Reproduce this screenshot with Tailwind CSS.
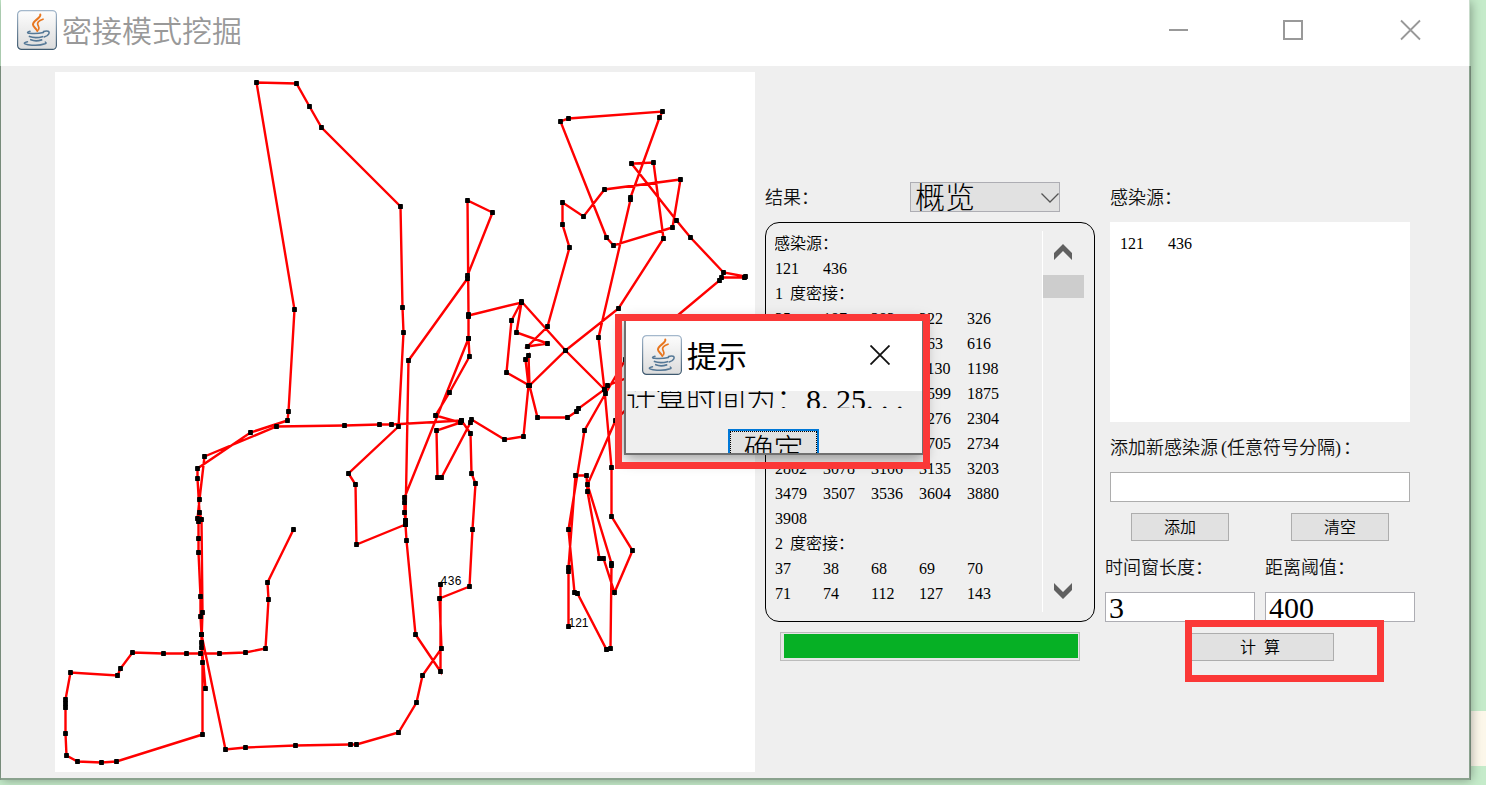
<!DOCTYPE html>
<html lang="zh-CN">
<head>
<meta charset="utf-8">
<title>密接模式挖掘</title>
<script src="https://cdn.jsdelivr.net/npm/@tailwindcss/browser@4"></script>
</head>
<body class="w-[1486px] h-[785px] overflow-hidden bg-[#c5ebca] font-['Liberation_Serif','Noto_Sans_CJK_SC',serif] text-black">
<svg class="absolute w-0 h-0">
  <defs>
    <linearGradient id="tile" x1="0" y1="0" x2="0" y2="1"><stop offset="0" stop-color="#fdfdfd"/><stop offset="1" stop-color="#dcdcdc"/></linearGradient>
    <linearGradient id="edge" x1="0" y1="0" x2="0" y2="1"><stop offset="0" stop-color="#a4b8cc"/><stop offset="1" stop-color="#3f5a70"/></linearGradient>
    <symbol id="java" viewBox="0 0 40 40">
      <rect x=".6" y=".6" width="38.8" height="38.8" rx="4" fill="url(#tile)" stroke="url(#edge)" stroke-width="1.2"/>
      <g fill="none" stroke-linecap="round">
        <path d="M23.3 4.5c1 3.6-7.6 6-7.3 10.200.2 2.300 3.500 3.800 4.300 6.300" stroke="#e8761f" stroke-width="2"/>
        <path d="M26 9.200c-3.300 1.200-6 3-5.300 5.300.5 1.600 2.300 3.200.8 5.300" stroke="#e8761f" stroke-width="1.700"/>
        <g stroke="#557896">
          <path d="M13 21.300c-3 .7-3.300 1.700-.5 2 4.500.5 9.500.3 14-.8" stroke-width="1.500"/>
          <path d="M26.500 21.500c4-1.300 6.500 0 5.300 2.300-.8 1.600-2.600 2.600-4.600 3.100" stroke-width="1.500"/>
          <path d="M12.500 26.500c3.500 1.300 9 1.200 13 .2" stroke-width="1.700"/>
          <path d="M13.800 29.700c3 1.300 7.500 1.200 10.800.2" stroke-width="1.700"/>
          <path d="M10.500 31.800c-4 .8-4.500 2.300.5 2.900 5.500.8 13.500.4 17-.9 1.500-.6 1.300-1.300.3-1.700" stroke-width="1.500"/>
        </g>
      </g>
    </symbol>
  </defs>
</svg>
<div class="relative w-[1486px] h-[785px] overflow-hidden">
  <div class="absolute left-[1470px] top-[711px] w-4 h-[55px] bg-[#fcf7ea]"></div>
  <div class="absolute left-0 top-[66px] w-[1471px] h-[714px] bg-[#8aa28e]"></div>

  <div class="relative ml-px w-[1469px] h-[778px] flex flex-col shadow-[0_2px_0_#8aa28e,1px_2px_10px_rgba(0,0,0,0.35)]">
    <header class="h-[66px] shrink-0 bg-white border-r border-[#c9dccc] flex items-start">
      <svg class="w-10 h-10 ml-4 mt-[10px]"><use href="#java"/></svg>
      <h1 class="ml-[5px] mt-[7px] text-[30px] leading-[44px] text-[#999] font-['Noto_Sans_CJK_SC',sans-serif] font-[350]">密接模式挖掘</h1>
      <svg class="ml-auto w-[254px] h-[22px] mt-[19px] mr-[46px]" viewBox="1168 19 254 22" fill="none" stroke="#999" stroke-width="2">
        <path d="M1168 30h0M1167 30h20"/><path d="M1283 21h18v18h-18z"/><path d="M1400 20.500l19 19M1419 20.500l-19 19" stroke-width="1.800"/>
      </svg>
    </header>

    <main class="flex-1 flex items-start bg-[#efefef] mr-px">
      <svg class="ml-[54px] mt-[6px] w-[700px] h-[700px] shrink-0 bg-white" viewBox="55 72 700 700">
        <defs><marker id="dot" markerUnits="userSpaceOnUse" markerWidth="6" markerHeight="6" refX="3" refY="3"><rect x=".6" y=".6" width="4.800" height="4.800" rx=".4"/></marker></defs>
        <path fill="none" stroke="#ff0000" stroke-width="2.400" marker-start="url(#dot)" marker-mid="url(#dot)" marker-end="url(#dot)" d="
M405.500 524.500L356.500 544.500 355.500 484.500 348.500 473.500 398.500 426.500 403.500 332.500 402.500 307.500 400.500 206.500 321.500 127.500 309.500 106.500 296.500 83.500 256.500 82.500 294.500 309.500 288.500 411.500 287.500 420.500 250.500 432.500 197.500 468.500 197.500 478.500 199.500 512.500 201.500 519.500 202.500 612.500 201.500 642.500 205.500 688.500
M461.500 420.500L391.500 424.500 379.500 424.500 344.500 425.500 276.500 426.500 204.500 456.500 199.500 499.500 197.500 518.500 198.500 521.500 198.500 538.500 198.500 552.500 200.500 596.500 200.500 616.500 201.500 634.500 201.500 647.500 202.500 662.500 202.500 734.500 116.500 761.500 101.500 762.500 77.500 761.500 66.500 755.500 65.500 733.500 65.500 707.500 65.500 703.500 65.500 699.500 70.500 672.500 117.500 675.500 120.500 668.500 132.500 652.500 163.500 653.500 186.500 653.500 200.500 653.500 219.500 653.500 245.500 652.500 265.500 648.500 268.500 599.500 267.500 582.500 293.500 529.500
M201.500 634.500L225.500 749.500 245.500 747.500 295.500 745.500 350.500 744.500 356.500 744.500 398.500 732.500 416.500 702.500 422.500 675.500 441.500 648.500 439.500 598.500 469.500 586.500 472.500 529.500 475.500 483.500 471.500 473.500 470.500 433.500 461.500 420.500
M440.500 584.500L440.500 671.500 415.500 634.500 406.500 540.500 405.500 524.500 405.500 520.500 404.500 512.500 404.500 502.500 404.500 497.500 468.500 338.500
M405.500 520.500L408.500 360.500 467.500 278.500 467.500 275.500 492.500 212.500 467.500 200.500 468.500 314.500 468.500 316.500 468.500 338.500 469.500 356.500 449.500 392.500 435.500 415.500 460.500 422.500 436.500 430.500 437.500 477.500 441.500 477.500 470.500 422.500 471.500 419.500 504.500 439.500 523.500 436.500 528.500 385.500 525.500 359.500 528.500 355.500 529.500 385.500 537.500 417.500 567.500 417.500 576.500 411.500 578.500 408.500 604.500 389.500 607.500 385.500 645 371
M468.500 315.500L521.500 302.500 516.500 332.500 547.500 343.500 527.500 346.500 547.500 326.500 569.500 247.500 562.500 224.500 562.500 202.500 583.500 216.500 604.500 189.500 680.500 179.500 672.500 227.500 613.500 245.500 606.500 237.500 560.500 121.500 568.500 118.500 662.500 111.500 659.500 117.500 630.500 197.500 630.500 199.500 598.500 337.500 604.500 389.500 611.500 467.500 611.500 516.500 632.500 550.500 614.500 592.500 603.500 558.500 599.500 558.500 587.500 491.500 586.500 475.500 575.500 475.500 568.500 567.500 568.500 571.500 568.500 626.500
M604.500 389.500L565.500 350.500 521.500 301.500 511.500 320.500 506.500 372.500 529.500 385.500 565.500 350.500 618.500 308.500 663.500 238.500 653.500 162.500 631.500 163.500 676.500 220.500 690.500 237.500 723.500 272.500 745.500 276.500 744.500 277.500 721.500 277.500 719.500 280.500 665 326
M625.500 359.500L605.500 393.500 584.500 430.500 568.500 529.500 574.500 592.500 577.500 593.500 606.500 649.500 610.500 648.500 611.500 565.500 611.500 563.500 587.500 484.500 615.500 420.500 640 395"/>
        <g class="font-['Liberation_Sans',sans-serif] text-[12px]"><text x="440.500" y="585" textLength="21">436</text><text x="568.500" y="627" textLength="20">121</text></g>
      </svg>

      <section class="ml-[10px] mt-[116px] w-[330px] shrink-0 text-[16px] leading-[25px]">
        <div class="flex h-[30px] items-center">
          <span class="w-[145px] pt-[2px] text-[18px] font-[350] text-[#111]">结果：</span>
          <div class="w-[150px] h-[30px] border border-[#adadb3] bg-[#e1e1e1] flex overflow-hidden">
            <span class="text-[30px] leading-[30px] pl-1 font-light">概览</span>
            <svg class="ml-auto mt-[9px] w-[18px] h-[12px]" viewBox="0 0 18 12" fill="none" stroke="#555" stroke-width="1.300"><path d="M.5 1.500l8.500 8.500 8.500-8.500"/></svg>
          </div>
        </div>
        <div class="mt-[10px] h-[400px] rounded-[14px] border border-black flex pt-2 pl-[9px] pr-[9px] pb-[9px]">
          <div class="w-[268px] overflow-hidden border-r border-white">
            <div class="-ml-px font-[350]">感染源：</div>
            <div class="grid grid-cols-[repeat(5,48px)]"><span>121</span><span>436</span></div>
            <div>1<span class="ml-[7px] font-[350]">度密接：</span></div>
            <div class="grid grid-cols-[repeat(5,48px)]">
              <span>35</span><span>187</span><span>283</span><span>322</span><span>326</span>
              <span class="col-start-4">563</span><span>616</span>
              <span class="col-start-4">1130</span><span>1198</span>
              <span class="col-start-4">1599</span><span>1875</span>
              <span class="col-start-4">2276</span><span>2304</span>
              <span class="col-start-4">2705</span><span>2734</span>
              <span>2802</span><span>3078</span><span>3106</span><span>3135</span><span>3203</span>
              <span>3479</span><span>3507</span><span>3536</span><span>3604</span><span>3880</span>
              <span>3908</span>
            </div>
            <div>2<span class="ml-[7px] font-[350]">度密接：</span></div>
            <div class="grid grid-cols-[repeat(5,48px)]">
              <span>37</span><span>38</span><span>68</span><span>69</span><span>70</span>
              <span>71</span><span>74</span><span>112</span><span>127</span><span>143</span>
            </div>
          </div>
          <div class="w-[42px] flex flex-col">
            <svg class="ml-[11px] mt-[13px] w-[18px] h-[16px]" viewBox="0 0 18 16" fill="#606060"><path d="M0 9l9-9 9 9v7L9 7 0 16z"/></svg>
            <div class="mt-[15px] w-[41px] h-[23px] bg-[#cdcdcd]"></div>
            <svg class="ml-[11px] mt-auto mb-[13px] w-[18px] h-[16px]" viewBox="0 0 18 16" fill="#606060"><path d="M0 0l9 9 9-9v7l-9 9-9-9z"/></svg>
          </div>
        </div>
        <div class="ml-[15px] mt-[10px] w-[300px] h-[29px] border border-[#bcbcbc] bg-[#e6e6e6] pl-[3px] pr-px pt-px pb-[2px]"><div class="h-full bg-[#06b025]"></div></div>
      </section>

      <section class="ml-[10px] mt-[116px] w-[310px] shrink-0 text-[18px] leading-[32px] font-[350] text-[#111]">
        <div class="pl-[5px]">
          <div class="h-[30px]">感染源：</div>
          <div class="mt-[10px] w-[300px] h-[200px] bg-white pl-[10px] pt-[9px] text-black text-[16px] leading-[25px] grid grid-cols-[48px_48px] content-start"><span>121</span><span>436</span></div>
          <div class="mt-[10px] h-[30px] whitespace-nowrap"><span>添加新感染源</span><span class="inline-block w-[9px] text-right">(</span><span>任意符号分隔</span><span class="inline-block w-[8px]">)</span><span>：</span></div>
          <div class="mt-[10px] w-[300px] h-[30px] bg-white border border-[#adadad]"></div>
        </div>
        <div class="mt-[11px] pl-[26px] flex gap-[62px] text-[16px] leading-[27px] text-center text-black">
          <div class="w-[98px] h-[28px] border border-[#adadad] bg-[#e1e1e1]">添加</div>
          <div class="w-[98px] h-[28px] border border-[#adadad] bg-[#e1e1e1]">清空</div>
        </div>
        <div class="mt-[11px] flex gap-[10px]">
          <div class="w-[150px]"><div class="h-[30px]">时间窗长度：</div><div class="mt-[10px] h-[30px] bg-white border border-[#adadb3] pl-[3px] text-[30px] leading-[30px] text-black">3</div></div>
          <div class="w-[150px]"><div class="h-[30px]">距离阈值：</div><div class="mt-[10px] h-[30px] bg-white border border-[#adadb3] pl-[3px] text-[30px] leading-[30px] text-black">400</div></div>
        </div>
        <div class="mt-[11px] ml-[81px] w-[148px] h-[28px] border border-[#adadad] bg-[#e1e1e1] flex justify-center gap-2 text-[16px] leading-[27px] text-black"><span>计</span><span>算</span></div>
      </section>
    </main>
  </div>

  <div class="absolute left-[624px] top-[318px] w-[300px] h-[137px] bg-[#efefef] border-2 border-[#707070] shadow-[0_4px_14px_rgba(0,0,0,0.4)] overflow-hidden flex flex-col">
    <div class="h-[71px] shrink-0 bg-white flex items-start">
      <svg class="w-10 h-10 ml-4 mt-[15px]"><use href="#java"/></svg>
      <span class="ml-[5px] mt-[12px] text-[30px] leading-[44px] font-['Noto_Sans_CJK_SC',sans-serif]">提示</span>
      <svg class="ml-auto mr-[32px] mt-[25px] w-5 h-5" viewBox="0 0 20 20" stroke="#111" stroke-width="1.800"><path d="M.5 .5l19 19M19.500 .5L.5 19.500"/></svg>
    </div>
    <div class="h-[17px] shrink-0 overflow-hidden flex items-center text-[30px] leading-[30px] whitespace-nowrap font-light"><span>计算时间为：</span><span>8<span class="tracking-[7.5px]">.</span>25<span class="tracking-[7.5px]">...</span></span></div>
    <div class="ml-[102px] mt-[21px] w-[91px] h-[40px] shrink-0 border-2 border-[#0078d7] bg-[#e1e1e1]">
      <div class="h-full border border-dotted border-black text-center text-[30px] leading-[36px] font-light">确定</div>
    </div>
  </div>
  <div class="absolute left-[765px] top-[455px] w-px h-[7px] bg-black"></div>
  <div class="absolute left-[615px] top-[314px] w-[315px] h-[155px] border-[7px] border-[#fb3837]"></div>
  <div class="absolute left-[1185px] top-[620px] w-[199px] h-[62px] border-[7px] border-[#fb3837]"></div>
</div>
</body>
</html>
